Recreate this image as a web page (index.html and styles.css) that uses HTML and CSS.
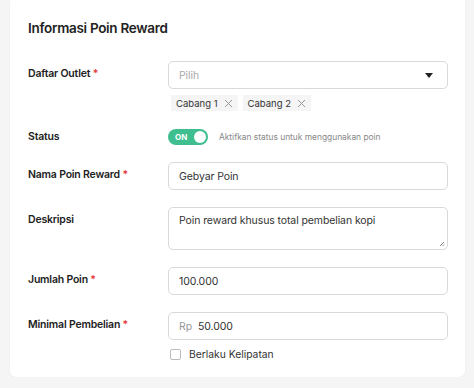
FILE: index.html
```html
<!DOCTYPE html>
<html lang="id">
  <head>
    <meta charset="UTF-8" />
    <meta name="viewport" content="width=device-width, initial-scale=1" />
    <title>Informasi Poin Reward</title>
    <link rel="stylesheet" href="styles.css">
  </head>
  <body>
    <div class="card">
      <h2>Informasi Poin Reward</h2>

      <div class="row">
        <label class="label">Daftar Outlet <span class="req">*</span></label>
        <div class="field">
          <div class="select">
            <span class="placeholder">Pilih</span>
            <svg class="caret" width="8" height="5" viewBox="0 0 8 5"><path d="M0 0h8L4 5z" fill="#222"/></svg>
          </div>
          <div class="tags">
            <span class="tag">Cabang 1
              <svg width="9" height="9" viewBox="0 0 9 9"><path d="M1 1l7 7M8 1L1 8" stroke="#999" stroke-width="1"/></svg>
            </span>
            <span class="tag">Cabang 2
              <svg width="9" height="9" viewBox="0 0 9 9"><path d="M1 1l7 7M8 1L1 8" stroke="#999" stroke-width="1"/></svg>
            </span>
          </div>
        </div>
      </div>

      <div class="row row-status">
        <label class="label">Status</label>
        <div class="field status">
          <span class="toggle"><span class="toggle-text">ON</span><span class="knob"></span></span>
          <span class="hint">Aktifkan status untuk menggunakan poin</span>
        </div>
      </div>

      <div class="row">
        <label class="label">Nama Poin Reward <span class="req">*</span></label>
        <div class="field">
          <div class="input">Gebyar Poin</div>
        </div>
      </div>

      <div class="row">
        <label class="label">Deskripsi</label>
        <div class="field">
          <div class="input textarea">Poin reward khusus total pembelian kopi
            <svg class="grip" width="6" height="6" viewBox="0 0 6 6"><path d="M5 1L1 5M5 3.5L3.5 5" stroke="#777" stroke-width="0.9"/></svg>
          </div>
        </div>
      </div>

      <div class="row">
        <label class="label">Jumlah Poin <span class="req">*</span></label>
        <div class="field">
          <div class="input">100.000</div>
        </div>
      </div>

      <div class="row">
        <label class="label">Minimal Pembelian <span class="req">*</span></label>
        <div class="field">
          <div class="input"><span class="prefix">Rp</span>50.000</div>
          <div class="check">
            <span class="box"></span>
            <span>Berlaku Kelipatan</span>
          </div>
        </div>
      </div>
    </div>
  </body>
</html>
```

FILE: styles.css
```css
body {
  margin: 0;
  padding: 0 9px 0 10px;
  background-color: #f5f5f5;
  font-family: Inter, "Noto Sans", sans-serif;
  color: #222;
}

.card {
  background: white;
  padding: 18px 17px 17px 18px;
  border-radius: 0 0 6px 6px;
  box-shadow: 0 1px 2px rgba(0, 0, 0, 0.05);
  display: flex;
  flex-direction: column;
  gap: 17px;
}

h2 {
  margin: 0 0 6px 0;
  font-size: 13.5px;
  line-height: 20px;
  font-weight: 600;
  letter-spacing: -0.3px;
  color: #222;
}

.row {
  display: flex;
  align-items: flex-start;
}

.label {
  width: 140px;
  flex-shrink: 0;
  font-size: 10.5px;
  font-weight: 600;
  letter-spacing: -0.2px;
  line-height: 26px;
  color: #222;
}

.row-status .label {
  line-height: 17px;
}

.req {
  color: #e5393c;
}

.field {
  width: 280px;
}

.select,
.input {
  box-sizing: border-box;
  height: 28px;
  border: 1px solid #d9d9d9;
  border-radius: 5px;
  padding: 0 10px;
  display: flex;
  align-items: center;
  font-size: 10.5px;
  letter-spacing: -0.1px;
  color: #333;
}

.select {
  justify-content: space-between;
  padding-right: 14px;
}

.placeholder {
  color: #aaa;
}

.tags {
  display: flex;
  gap: 5px;
  margin-top: 6px;
  padding-left: 3px;
}

.tag {
  display: flex;
  align-items: center;
  gap: 6px;
  height: 16px;
  padding: 0 5px;
  background-color: #f5f5f5;
  font-size: 9.5px;
  color: #333;
}

.status {
  display: flex;
  align-items: center;
  gap: 11px;
  height: 17px;
}

.toggle {
  display: flex;
  align-items: center;
  justify-content: space-between;
  box-sizing: border-box;
  width: 40px;
  height: 16px;
  padding: 0 2px 0 7px;
  border-radius: 8px;
  background-color: #3fbf8f;
}

.toggle-text {
  font-size: 8px;
  font-weight: 700;
  color: white;
}

.knob {
  width: 12px;
  height: 12px;
  border-radius: 50%;
  background: white;
}

.hint {
  font-size: 8.4px;
  color: #888;
}

.textarea {
  position: relative;
  height: 43px;
  align-items: flex-start;
  padding-top: 6px;
}

.grip {
  position: absolute;
  right: 2px;
  bottom: 2px;
}

.prefix {
  color: #999;
  margin-right: 6px;
}

.check {
  display: flex;
  align-items: center;
  gap: 8px;
  margin-top: 8px;
  padding-left: 2px;
  font-size: 10.3px;
  color: #333;
}

.box {
  box-sizing: border-box;
  width: 11px;
  height: 11px;
  border: 1px solid #bbb;
  border-radius: 2px;
}
```
